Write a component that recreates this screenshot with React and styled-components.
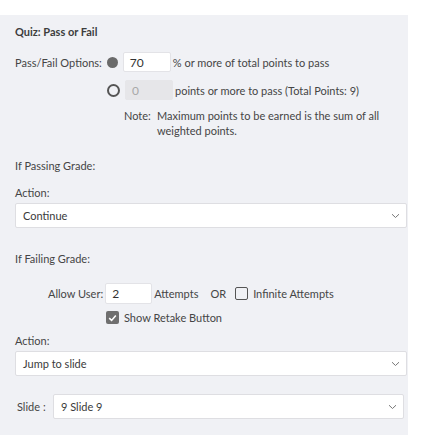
import React from 'react'
import styled, { createGlobalStyle } from 'styled-components'

const Global = createGlobalStyle`
  html, body { margin: 0; padding: 0; background: #fff; }
  body { font-family: Lato, "Open Sans", sans-serif; font-size: 11px; color: #454545; }
`

const Panel = styled.div`
  margin-top: 15px;
  width: 408px;
  height: 420px;
  box-sizing: border-box;
  background: #f0f1f5;
  padding: 10px 0 0 15px;
  display: flex;
  flex-direction: column;
`

const Title = styled.div`
  font-weight: 700;
  color: #3d3d3d;
  line-height: 14px;
`

const Label = styled.div`
  line-height: 14px;
  margin-top: ${p => p.$mt || 0}px;
`

const Row = styled.div`
  display: flex;
  align-items: center;
  margin-top: ${p => p.$mt || 0}px;
  padding-left: ${p => p.$indent || 0}px;
`

const Radio = styled.span`
  width: ${p => (p.$checked ? 11 : 9)}px;
  height: ${p => (p.$checked ? 11 : 9)}px;
  border-radius: 50%;
  background: ${p => (p.$checked ? '#6a6a6a' : 'transparent')};
  border: ${p => (p.$checked ? 'none' : '2px solid #555')};
  margin: 0 5px 0 ${p => p.$ml || 0}px;
  flex-shrink: 0;
`

const Field = styled.div`
  box-sizing: border-box;
  width: ${p => p.$w || 48}px;
  height: ${p => p.$h || 20}px;
  background: ${p => (p.$disabled ? '#e6e6e9' : '#fff')};
  border: 1px solid ${p => (p.$disabled ? '#e6e6e9' : '#e3e3e7')};
  border-radius: 2px;
  color: ${p => (p.$disabled ? '#a8a8a8' : '#333')};
  font-size: 12px;
  display: flex;
  align-items: center;
  padding-left: 6px;
  margin-right: 2px;
  flex-shrink: 0;
`

const Note = styled.div`
  display: flex;
  margin-top: 8px;
  padding-left: 109px;
  line-height: 15px;
`

const NoteHead = styled.span`
  width: 33px;
  flex-shrink: 0;
`

const NoteBody = styled.span`
  width: 240px;
`

const Select = styled.div`
  box-sizing: border-box;
  width: ${p => p.$w || 392}px;
  height: 25px;
  background: #fff;
  border: 1px solid #dedee2;
  border-radius: 2px;
  display: flex;
  align-items: center;
  justify-content: space-between;
  padding: 0 6px 0 7px;
  margin-top: ${p => p.$mt || 0}px;
  color: #3a3a3a;
`

const Check = styled.span`
  box-sizing: border-box;
  width: 13px;
  height: 13px;
  border-radius: 2px;
  background: ${p => (p.$checked ? '#6f6f6f' : 'transparent')};
  border: ${p => (p.$checked ? 'none' : '1.5px solid #555')};
  display: inline-flex;
  align-items: center;
  justify-content: center;
  margin-right: 5px;
  flex-shrink: 0;
`

const Sep = styled.span`
  margin: 0 9px 0 12px;
`

const SlideLabel = styled.span`
  width: 36px;
`

const Chevron = () => (
  <svg width="9" height="6" viewBox="0 0 9 6">
    <path d="M1 1.2 L4.5 4.5 L8 1.2" fill="none" stroke="#777" strokeWidth="1" />
  </svg>
)

const Tick = () => (
  <svg width="9" height="8" viewBox="0 0 9 8">
    <path d="M1.2 4.2 L3.6 6.4 L7.8 1.5" fill="none" stroke="#fff" strokeWidth="1.6" />
  </svg>
)

export default function App() {
  return (
    <>
      <Global />
      <Panel>
        <Title>Quiz: Pass or Fail</Title>

        <Row $mt={13}>
          <span>Pass/Fail Options:</span>
          <Radio $checked $ml={5} />
          <Field>70</Field>
          <span>% or more of total points to pass</span>
        </Row>

        <Row $mt={8} $indent={92}>
          <Radio />
          <Field $disabled>0</Field>
          <span>points or more to pass (Total Points: 9)</span>
        </Row>

        <Note>
          <NoteHead>Note:</NoteHead>
          <NoteBody>Maximum points to be earned is the sum of all weighted points.</NoteBody>
        </Note>

        <Label $mt={21}>If Passing Grade:</Label>
        <Label $mt={13}>Action:</Label>
        <Select $mt={3}>
          <span>Continue</span>
          <Chevron />
        </Select>

        <Label $mt={24}>If Failing Grade:</Label>

        <Row $mt={17} $indent={33}>
          <span>Allow User:</span>
          <Field $w={47} $h={21} style={{ marginLeft: 2 }}>2</Field>
          <span>Attempts</span>
          <Sep>OR</Sep>
          <Check />
          <span>Infinite Attempts</span>
        </Row>

        <Row $mt={7} $indent={91}>
          <Check $checked>
            <Tick />
          </Check>
          <span>Show Retake Button</span>
        </Row>

        <Label $mt={10}>Action:</Label>
        <Select $mt={3}>
          <span>Jump to slide</span>
          <Chevron />
        </Select>

        <Row $mt={18} $indent={2}>
          <SlideLabel>Slide :</SlideLabel>
          <Select $w={351}>
            <span>9 Slide 9</span>
            <Chevron />
          </Select>
        </Row>
      </Panel>
    </>
  )
}
